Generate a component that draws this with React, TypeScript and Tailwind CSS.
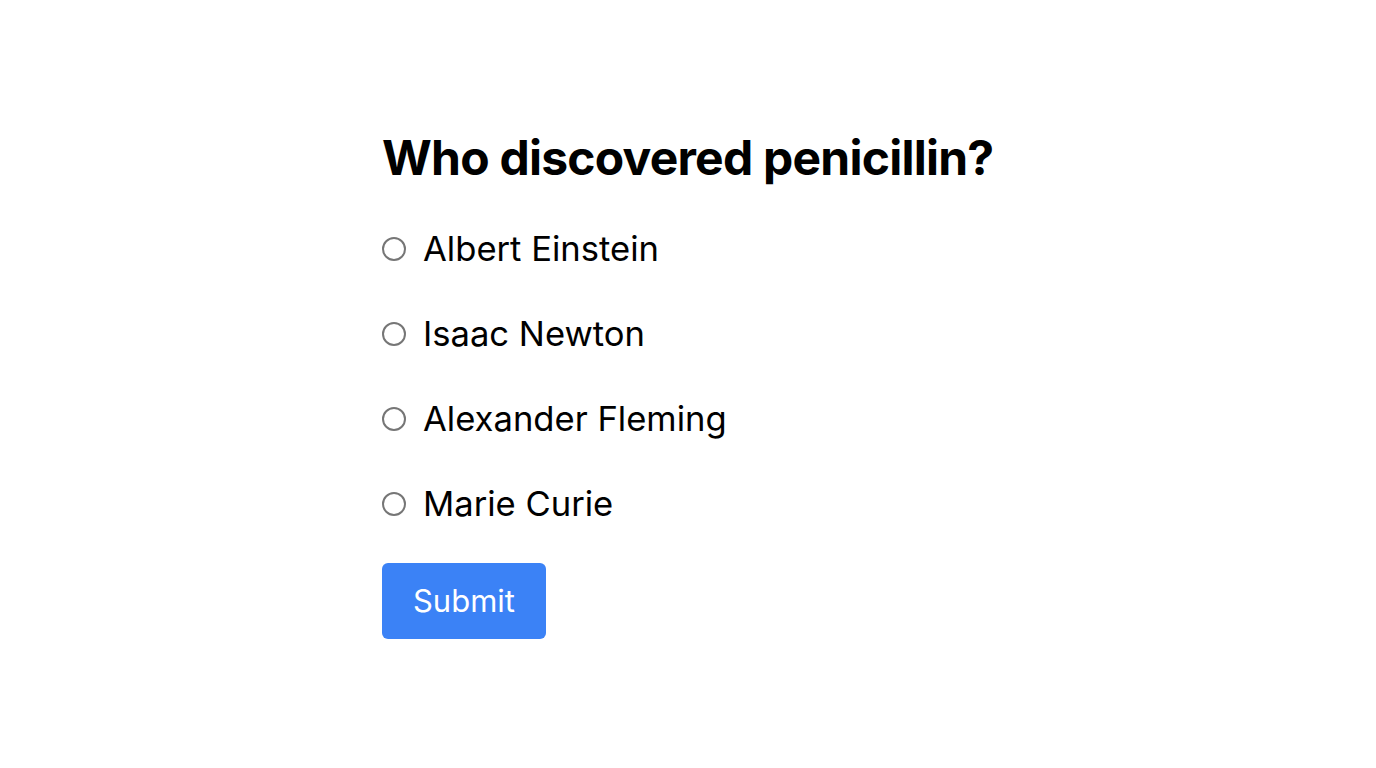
export default function App() {
  const options = ["Albert Einstein", "Isaac Newton", "Alexander Fleming", "Marie Curie"];
  return (
    <div className="min-h-screen bg-white flex justify-center" style={{ fontFamily: "Inter, 'Noto Sans', sans-serif" }}>
      <div className="w-[612px] pt-[126px]">
        <h1 className="text-[48px] leading-[64px] font-bold tracking-[-0.016em] text-black whitespace-nowrap">Who discovered penicillin?</h1>
        <div className="mt-[36px] flex flex-col gap-[40px]">
          {options.map((o) => (
            <label key={o} className="flex items-center gap-[17px] h-[45px] text-[34.6px] text-black">
              <input
                type="radio"
                name="q"
                className="appearance-none w-6 h-6 m-0 rounded-full border-2 border-[#767676] bg-white shrink-0"
              />
              <span>{o}</span>
            </label>
          ))}
        </div>
        <button className="mt-[37px] w-[164px] h-[76px] bg-[#3b82f6] text-white text-[31px] rounded-[6px]">Submit</button>
      </div>
    </div>
  );
}
